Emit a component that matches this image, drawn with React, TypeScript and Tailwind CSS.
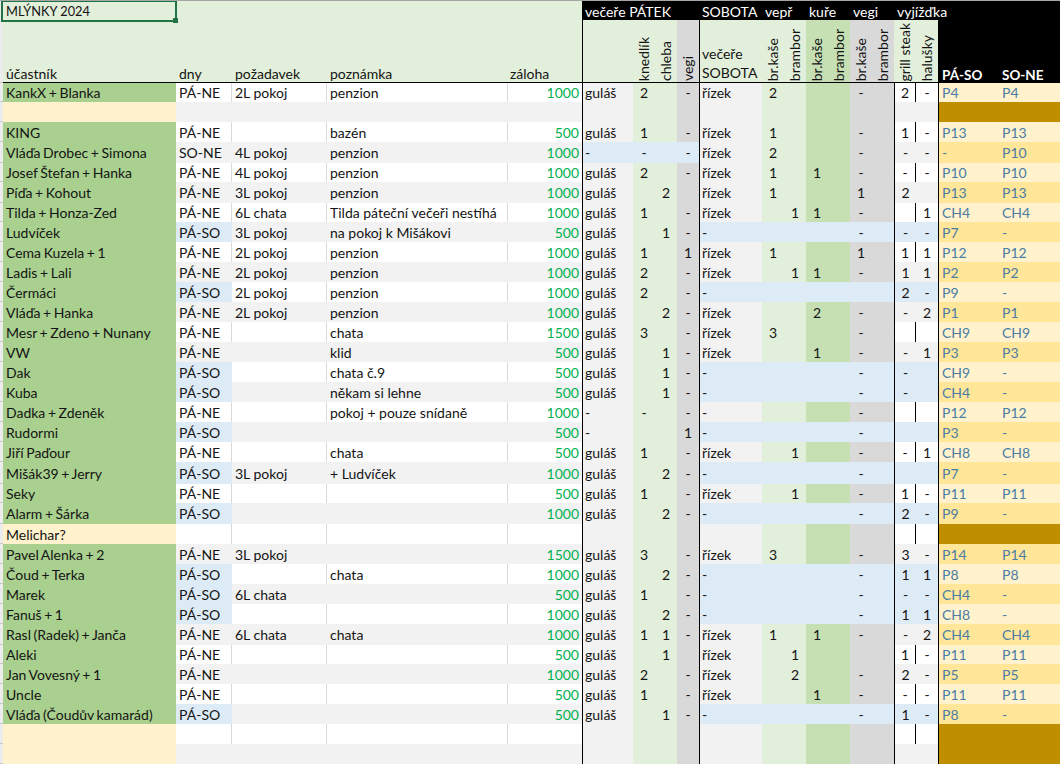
import React from "react";

type Row = {
  name: string;
  dny?: string;
  poz?: string;
  pozn?: string;
  zal?: string;
  fri?: string[];
  sat?: string[];
  ride?: string[];
  rooms?: string[];
  friBlue?: boolean;
  satBlue?: boolean;
};

const gul = (k: string, c: string, v: string) => ["guláš", k, c, v];
const riz = (a: string, b: string, c: string, d: string, e: string) => ["řízek", a, b, c, d, e, ""];
const noSat = (v = "-") => ["-", "", "", "", "", v, ""];

const rows: Row[] = [
  { name: "KankX + Blanka", dny: "PÁ-NE", poz: "2L pokoj", pozn: "penzion", zal: "1000", fri: gul("2", "", "-"), sat: riz("2", "", "", "", "-"), ride: ["2", "-"], rooms: ["P4", "P4"] },
  { name: "" },
  { name: "KING", dny: "PÁ-NE", pozn: "bazén", zal: "500", fri: gul("1", "", "-"), sat: riz("1", "", "", "", "-"), ride: ["1", "-"], rooms: ["P13", "P13"] },
  { name: "Vláďa Drobec + Simona", dny: "SO-NE", poz: "4L pokoj", pozn: "penzion", zal: "1000", fri: ["-", "-", "", "-"], friBlue: true, sat: riz("2", "", "", "", "-"), ride: ["-", "-"], rooms: ["-", "P10"] },
  { name: "Josef Štefan + Hanka", dny: "PÁ-NE", poz: "4L pokoj", pozn: "penzion", zal: "1000", fri: gul("2", "", "-"), sat: riz("1", "", "1", "", "-"), ride: ["-", "-"], rooms: ["P10", "P10"] },
  { name: "Píďa + Kohout", dny: "PÁ-NE", poz: "3L pokoj", pozn: "penzion", zal: "1000", fri: gul("", "2", ""), sat: riz("1", "", "", "", "1"), ride: ["2", ""], rooms: ["P13", "P13"] },
  { name: "Tilda + Honza-Zed", dny: "PÁ-NE", poz: "6L chata", pozn: "Tilda páteční večeři nestíhá", zal: "1000", fri: gul("1", "", "-"), sat: riz("", "1", "1", "", "-"), ride: ["", "1"], rooms: ["CH4", "CH4"] },
  { name: "Ludvíček", dny: "PÁ-SO", poz: "3L pokoj", pozn: "na pokoj k Mišákovi", zal: "500", fri: gul("", "1", "-"), sat: noSat(), satBlue: true, ride: ["-", "-"], rooms: ["P7", "-"] },
  { name: "Cema Kuzela + 1", dny: "PÁ-NE", poz: "2L pokoj", pozn: "penzion", zal: "1000", fri: gul("1", "", "1"), sat: riz("1", "", "", "", "1"), ride: ["1", "1"], rooms: ["P12", "P12"] },
  { name: "Ladis + Lali", dny: "PÁ-NE", poz: "2L pokoj", pozn: "penzion", zal: "1000", fri: gul("2", "", "-"), sat: riz("", "1", "1", "", "-"), ride: ["1", "1"], rooms: ["P2", "P2"] },
  { name: "Čermáci", dny: "PÁ-SO", poz: "2L pokoj", pozn: "penzion", zal: "1000", fri: gul("2", "", "-"), sat: noSat(""), satBlue: true, ride: ["2", "-"], rooms: ["P9", "-"] },
  { name: "Vláďa + Hanka", dny: "PÁ-NE", poz: "2L pokoj", pozn: "penzion", zal: "1000", fri: gul("", "2", "-"), sat: riz("", "", "2", "", "-"), ride: ["-", "2"], rooms: ["P1", "P1"] },
  { name: "Mesr + Zdeno + Nunany", dny: "PÁ-NE", pozn: "chata", zal: "1500", fri: gul("3", "", "-"), sat: riz("3", "", "", "", "-"), ride: ["", ""], rooms: ["CH9", "CH9"] },
  { name: "VW", dny: "PÁ-NE", pozn: "klid", zal: "500", fri: gul("", "1", "-"), sat: riz("", "", "1", "", "-"), ride: ["-", "1"], rooms: ["P3", "P3"] },
  { name: "Dak", dny: "PÁ-SO", pozn: "chata č.9", zal: "500", fri: gul("", "1", "-"), sat: noSat(), satBlue: true, ride: ["-", ""], rooms: ["CH9", "-"] },
  { name: "Kuba", dny: "PÁ-SO", pozn: "někam si lehne", zal: "500", fri: gul("", "1", "-"), sat: noSat(), satBlue: true, ride: ["-", ""], rooms: ["CH4", "-"] },
  { name: "Dadka + Zdeněk", dny: "PÁ-NE", pozn: "pokoj + pouze snídaně", zal: "1000", fri: ["-", "-", "", "-"], sat: noSat(), ride: ["", ""], rooms: ["P12", "P12"] },
  { name: "Rudormi", dny: "PÁ-SO", zal: "500", fri: ["-", "", "", "1"], sat: noSat(), satBlue: true, ride: ["", ""], rooms: ["P3", "-"] },
  { name: "Jiří Paďour", dny: "PÁ-NE", pozn: "chata", zal: "500", fri: gul("1", "", "-"), sat: riz("", "1", "", "", "-"), ride: ["-", "1"], rooms: ["CH8", "CH8"] },
  { name: "Mišák39 + Jerry", dny: "PÁ-SO", poz: "3L pokoj", pozn: "+ Ludvíček", zal: "1000", fri: gul("", "2", "-"), sat: noSat(), satBlue: true, ride: ["", ""], rooms: ["P7", "-"] },
  { name: "Seky", dny: "PÁ-NE", zal: "500", fri: gul("1", "", "-"), sat: riz("", "1", "", "", "-"), ride: ["1", "-"], rooms: ["P11", "P11"] },
  { name: "Alarm + Šárka", dny: "PÁ-SO", zal: "1000", fri: gul("", "2", "-"), sat: noSat(), satBlue: true, ride: ["2", "-"], rooms: ["P9", "-"] },
  { name: "Melichar?" },
  { name: "Pavel Alenka + 2", dny: "PÁ-NE", poz: "3L pokoj", zal: "1500", fri: gul("3", "", "-"), sat: riz("3", "", "", "", "-"), ride: ["3", "-"], rooms: ["P14", "P14"] },
  { name: "Čoud + Terka", dny: "PÁ-SO", pozn: "chata", zal: "1000", fri: gul("", "2", "-"), sat: noSat(), satBlue: true, ride: ["1", "1"], rooms: ["P8", "P8"] },
  { name: "Marek", dny: "PÁ-SO", poz: "6L chata", zal: "500", fri: gul("1", "", "-"), sat: noSat(), satBlue: true, ride: ["-", "-"], rooms: ["CH4", "-"] },
  { name: "Fanuš + 1", dny: "PÁ-SO", zal: "1000", fri: gul("", "2", "-"), sat: noSat(), satBlue: true, ride: ["1", "1"], rooms: ["CH8", "-"] },
  { name: "Rasl (Radek) + Janča", dny: "PÁ-NE", poz: "6L chata", pozn: "chata", zal: "1000", fri: gul("1", "1", "-"), sat: riz("1", "", "1", "", "-"), ride: ["-", "2"], rooms: ["CH4", "CH4"] },
  { name: "Aleki", dny: "PÁ-NE", zal: "500", fri: gul("", "1", ""), sat: riz("", "1", "", "", ""), ride: ["1", "-"], rooms: ["P11", "P11"] },
  { name: "Jan Vovesný + 1", dny: "PÁ-NE", zal: "1000", fri: gul("2", "", "-"), sat: riz("", "2", "", "", "-"), ride: ["2", "-"], rooms: ["P5", "P5"] },
  { name: "Uncle", dny: "PÁ-NE", zal: "500", fri: gul("1", "", "-"), sat: riz("", "", "1", "", "-"), ride: ["-", "-"], rooms: ["P11", "P11"] },
  { name: "Vláďa (Čoudův kamarád)", dny: "PÁ-SO", zal: "500", fri: gul("", "1", "-"), sat: noSat(), satBlue: true, ride: ["1", "-"], rooms: ["P8", "-"] },
  { name: "" },
  { name: "" },
];

const friBg = ["bg-[#f2f2f2]", "bg-[#e2efda]", "bg-[#e2efda]", "bg-[#d9d9d9]"];
const satBg = ["bg-[#f2f2f2]", "bg-[#e2efda]", "bg-[#e2efda]", "bg-[#c6e0b4]", "bg-[#c6e0b4]", "bg-[#d9d9d9]", "bg-[#d9d9d9]"];
const cell = "flex items-center overflow-hidden whitespace-nowrap pt-[1px] text-[14px] leading-none";
const ink = "text-[#141414]";

function Rotated({ text, bg = "bg-[#e2efda]" }: { text: string; bg?: string }) {
  return (
    <div className={`flex items-end justify-center border-b border-black pb-[1px] ${bg}`}>
      <span className={`rotate-180 whitespace-nowrap text-[14px] leading-[20px] [writing-mode:vertical-rl] ${ink}`}>{text}</span>
    </div>
  );
}

function TopLabel({ text, span }: { text: string; span: string }) {
  return (
    <div className={`flex items-center whitespace-nowrap bg-black pl-[3px] pt-[1px] text-[14px] text-white ${span}`}>
      {text}
    </div>
  );
}

function SheetRow({ row, i }: { row: Row; i: number }) {
  const white = i % 2 === 0;
  const band = white ? "bg-white" : "bg-[#f2f2f2]";
  const grid = white ? "border-r border-[#d9d9d9]" : "";
  const isBlank = !row.rooms;
  const nameBg = isBlank ? "bg-[#fff2cc]" : "bg-[#a9d08e]";
  const fri = row.fri ?? ["", "", "", ""];
  const sat = row.sat ?? ["", "", "", "", "", "", ""];
  const ride = row.ride ?? ["", ""];
  const blueDny = row.dny === "PÁ-SO";
  const rideBlue = row.satBlue;

  return (
    <>
      <div className="border-b border-[#c8c8c8] bg-[#ececec]" />
      <div className={`${cell} ${ink} pl-[3px] [word-spacing:-1px] ${nameBg}`}>{row.name}</div>
      <div className={`${cell} ${ink} pl-[3px] ${blueDny ? "bg-[#ddebf7]" : `${band} ${grid}`}`}>{row.dny}</div>
      <div className={`${cell} ${ink} pl-[3px] ${band} ${grid}`}>{row.poz}</div>
      <div className={`${cell} ${ink} pl-[3px] ${band} ${grid}`}>{row.pozn}</div>
      <div className={`${cell} justify-end pr-[3px] text-[#00b050] ${band}`}>{row.zal}</div>
      {fri.map((v, k) => (
        <div key={k} className={`${cell} ${ink} ${k === 0 ? "border-l border-black pl-[2px]" : "justify-center"} ${row.friBlue ? "bg-[#ddebf7]" : friBg[k]}`}>{v}</div>
      ))}
      {sat.map((v, k) => (
        <div key={k} className={`${cell} ${ink} ${k === 0 ? "border-l border-black pl-[2px]" : "justify-center"} ${row.satBlue ? "bg-[#ddebf7]" : satBg[k]}`}>{v}</div>
      ))}
      <div className={`${cell} ${ink} justify-center border-l border-black ${rideBlue ? "bg-[#ddebf7]" : `${band} ${grid}`}`}>{ride[0]}</div>
      <div className={`${cell} ${ink} justify-center ${rideBlue ? "bg-[#ddebf7]" : band}`}>{ride[1]}</div>
      {isBlank ? (
        <div className="col-span-2 border-l border-black bg-[#bf8f00]" />
      ) : (
        <>
          <div className={`${cell} border-l border-black pl-[3px] text-[#4a7ca6] ${white ? "bg-[#fff2cc]" : "bg-[#ffe699]"}`}>{row.rooms?.[0]}</div>
          <div className={`${cell} pl-[2px] text-[#4a7ca6] ${white ? "bg-[#fff2cc]" : "bg-[#ffe699]"}`}>{row.rooms?.[1]}</div>
        </>
      )}
    </>
  );
}

export default function App() {
  return (
    <div className="relative h-[764px] w-[1060px] overflow-hidden border-t border-[#a6a6a6] bg-white font-['Lato',sans-serif]">
      <div className="grid grid-cols-[3px_173px_56px_95px_181px_74px_51px_22px_22px_22px_63px_22px_22px_22px_22px_22px_22px_22px_22px_62px_60px] grid-rows-[19px_63px_19px_20px_20px_21px_19px_21px_19px_20px_20px_20px_20px_20px_20px_20px_20px_20px_20px_20px_20px_22px_19px_21px_20px_20px_20px_20px_20px_21px_19px_20px_20px_20px_20px_20px]">
        {/* top band */}
        <div className="bg-[#ececec]" />
        <div className={`col-span-5 flex items-center bg-[#e2efda] pl-[3px] pt-[2px] text-[12.8px] ${ink}`}>MLÝNKY 2024</div>
        <TopLabel text="večeře PÁTEK" span="col-span-4" />
        <TopLabel text="SOBOTA" span="col-span-1" />
        <TopLabel text="vepř" span="col-span-2" />
        <TopLabel text="kuře" span="col-span-2" />
        <TopLabel text="vegi" span="col-span-2" />
        <TopLabel text="vyjížďka" span="col-span-4" />

        {/* column heads */}
        <div className="border-b border-[#c8c8c8] bg-[#ececec]" />
        {["účastník", "dny", "požadavek", "poznámka"].map((h) => (
          <div key={h} className={`flex items-end border-b border-black bg-[#e2efda] pl-[3px] text-[14px] leading-[16px] ${ink}`}>{h}</div>
        ))}
        <div className={`flex items-end border-b border-black bg-[#e2efda] pl-[2px] text-[14px] leading-[16px] ${ink}`}>záloha</div>
        <div className="border-b border-l border-black bg-[#e2efda]" />
        <Rotated text="knedlík" />
        <Rotated text="chleba" />
        <Rotated text="vegi" bg="bg-[#d9d9d9]" />
        <div className={`flex flex-col justify-end border-b border-l border-black bg-[#e2efda] pl-[2px] text-[14px] leading-[18px] ${ink}`}>
          <span className="mb-[1px]">večeře</span>
          <span>SOBOTA</span>
        </div>
        <Rotated text="br.kaše" />
        <Rotated text="brambor" />
        <Rotated text="br.kaše" bg="bg-[#c6e0b4]" />
        <Rotated text="brambor" bg="bg-[#c6e0b4]" />
        <Rotated text="br.kaše" bg="bg-[#d9d9d9]" />
        <Rotated text="brambor" bg="bg-[#d9d9d9]" />
        <Rotated text="grill steak" />
        <Rotated text="halušky" />
        <div className="flex items-end bg-black pl-[4px] text-[13.5px] font-bold leading-[16px] text-white">PÁ-SO</div>
        <div className="flex items-end bg-black pl-[2px] text-[13.5px] font-bold leading-[16px] text-white">SO-NE</div>

        {rows.map((r, i) => (
          <SheetRow key={i} row={r} i={i} />
        ))}
      </div>

      {/* selected cell */}
      <div className="absolute left-[1px] top-[-1px] h-[22px] w-[176px] border-2 border-[#217346]">
        <div className="absolute bottom-[-3px] right-[-3px] h-[5px] w-[5px] bg-[#217346]" />
      </div>
    </div>
  );
}
